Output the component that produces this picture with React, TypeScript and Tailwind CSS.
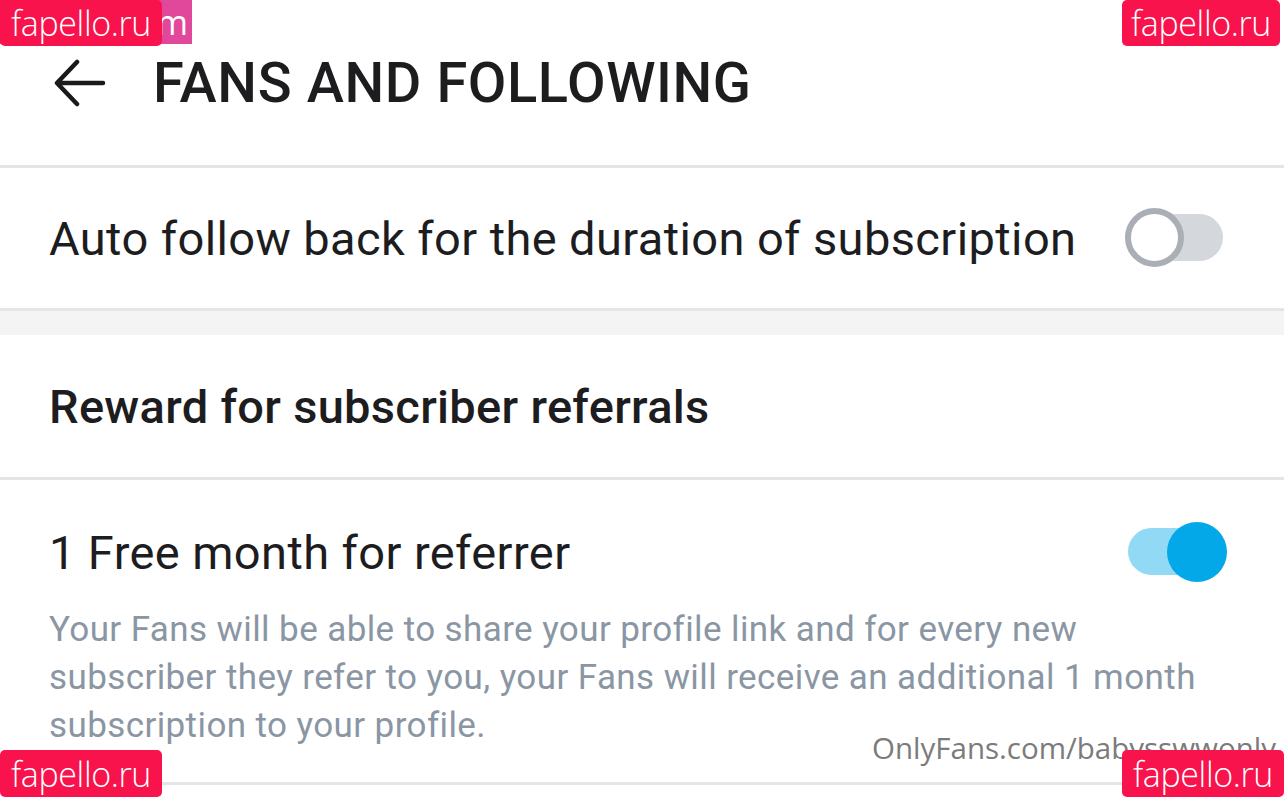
import React from "react";

function Toggle({ on }: { on: boolean }) {
  if (on) {
    return (
      <div className="relative h-[60px] w-[99px] shrink-0">
        <div className="absolute left-0 top-[6px] h-[47px] w-[95px] rounded-full bg-[#91d9f4]" />
        <div className="absolute right-0 top-0 h-[60px] w-[60px] rounded-full bg-[#02a8e8]" />
      </div>
    );
  }
  return (
    <div className="relative h-[60px] w-[98px] shrink-0">
      <div className="absolute right-0 top-[6px] h-[47px] w-[93px] rounded-full bg-[#d4d8dc]" />
      <div className="absolute left-0 top-0 h-[59px] w-[59px] rounded-full border-[6px] border-[#a9afb4] bg-white" />
    </div>
  );
}

function Mark({ className, children }: { className: string; children: React.ReactNode }) {
  return (
    <div
      className={
        "absolute flex items-center justify-center rounded-[5px] bg-[#f8134c] font-['Open_Sans',sans-serif] text-[34px] font-light leading-none tracking-[-0.4px] text-white " +
        className
      }
    >
      {children}
    </div>
  );
}

export default function App() {
  return (
    <div className="relative h-[797px] w-[1284px] overflow-hidden bg-white font-['Roboto',sans-serif] text-[#1d1d1f]">
      <header className="flex h-[168px] items-center border-b-[3px] border-[#e5e5e5] pl-[54px]">
        <svg width="52" height="50" viewBox="0 0 52 50" fill="none" stroke="#1a1a1a" strokeWidth="4.5" strokeLinecap="round" strokeLinejoin="round">
          <path d="M49 25H4M23 4L3 25l20 21" />
        </svg>
        <h1 className="ml-[47px] text-[56px] font-medium leading-none tracking-[0.6px]">FANS AND FOLLOWING</h1>
      </header>

      <div className="flex h-[143px] items-center justify-between border-b-[3px] border-[#e5e5e5] pl-[49px] pr-[61px]">
        <span className="text-[47px] leading-none tracking-[0.4px]">Auto follow back for the duration of subscription</span>
        <Toggle on={false} />
      </div>

      <div className="h-[24px] bg-[#f4f4f4]" />

      <div className="flex h-[145px] items-center border-b-[3px] border-[#e5e5e5] pl-[49px]">
        <span className="text-[47px] font-medium leading-none tracking-[0.3px]">Reward for subscriber referrals</span>
      </div>

      <div className="border-b-[3px] border-[#e5e5e5] pb-[32px] pl-[49px] pr-[57px] pt-[42px]">
        <div className="flex items-center justify-between">
          <span className="text-[47px] leading-none tracking-[0.4px]">1 Free month for referrer</span>
          <Toggle on={true} />
        </div>
        <p className="mt-[24px] text-[35px] leading-[48px] tracking-[0.4px] text-[#8a96a3]">
          Your Fans will be able to share your profile link and for every new
          <br />
          subscriber they refer to you, your Fans will receive an additional 1 month
          <br />
          subscription to your profile.
        </p>
      </div>

      <div className="absolute left-[872px] top-[733px] font-['Open_Sans',sans-serif] text-[29.5px] leading-none text-[#7b7b7b]">
        OnlyFans.com/babysswwonly
      </div>

      <div className="absolute left-0 top-0 flex h-[44px] w-[192px] items-center justify-end bg-[#e1489b] pr-[4px] font-['Open_Sans',sans-serif] text-[34px] leading-none text-white">
        m
      </div>
      <Mark className="left-0 top-0 h-[46px] w-[162px] rounded-tl-none">fapello.ru</Mark>
      <Mark className="left-[1122px] top-0 h-[46px] w-[158px]">fapello.ru</Mark>
      <Mark className="left-0 top-[750px] h-[47px] w-[162px]">fapello.ru</Mark>
      <Mark className="left-[1122px] top-[750px] h-[47px] w-[162px]">fapello.ru</Mark>
    </div>
  );
}
